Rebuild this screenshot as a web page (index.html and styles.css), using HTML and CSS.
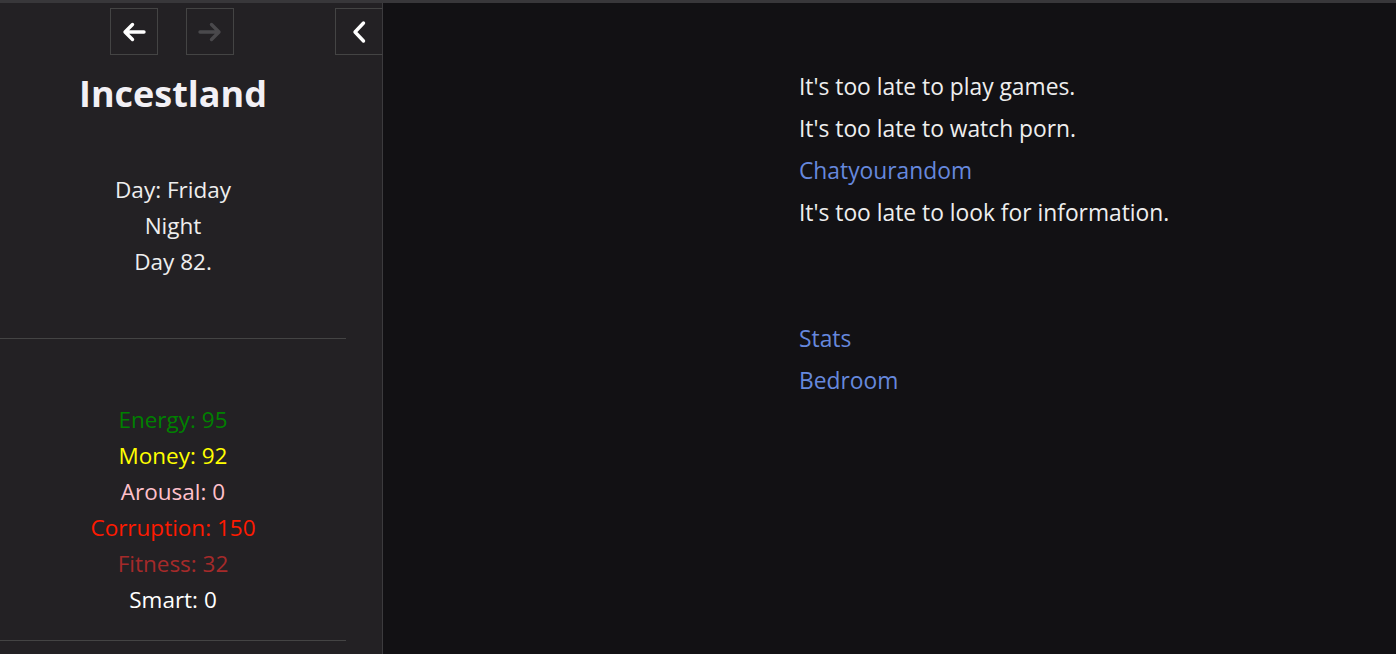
FILE: index.html
```html
<!DOCTYPE html>
<html lang="en">
<head>
  <meta charset="UTF-8">
  <title>Incestland</title>
  <link rel="stylesheet" href="styles.css">
</head>
<body>
  <aside class="sidebar">
    <div class="history">
      <button class="hbtn" title="Backward">
        <svg width="26" height="22" viewBox="0 0 26 22"><path d="M23 11H4.5M11.5 3.5L4 11l7.5 7.5" fill="none" stroke="#fff" stroke-width="3.4" stroke-linecap="round" stroke-linejoin="round"/></svg>
      </button>
      <button class="hbtn off" title="Forward">
        <svg width="26" height="22" viewBox="0 0 26 22"><path d="M3 11h18.5M14.5 3.5L22 11l-7.5 7.5" fill="none" stroke="#4a494c" stroke-width="3.4" stroke-linecap="round" stroke-linejoin="round"/></svg>
      </button>
    </div>
    <button class="stow" title="Toggle the UI bar">
      <svg width="18" height="24" viewBox="0 0 18 24"><path d="M13.5 3L5 12l8.5 9" fill="none" stroke="#fff" stroke-width="3.4" stroke-linecap="round" stroke-linejoin="round"/></svg>
    </button>

    <h1 class="title">Incestland</h1>

    <div class="caption">
      <div>Day: Friday</div>
      <div>Night</div>
      <div>Day 82.</div>
    </div>

    <hr class="rule">

    <div class="stats">
      <div class="energy">Energy: 95</div>
      <div class="money">Money: 92</div>
      <div class="arousal">Arousal: 0</div>
      <div class="corruption">Corruption: 150</div>
      <div class="fitness">Fitness: 32</div>
      <div class="smart">Smart: 0</div>
    </div>

    <hr class="rule">
  </aside>

  <main class="story">
    <div class="passage">
      <p>It's too late to play games.</p>
      <p>It's too late to watch porn.</p>
      <p><a href="#">Chatyourandom</a></p>
      <p>It's too late to look for information.</p>
      <p class="blank"></p>
      <p class="blank"></p>
      <p><a href="#">Stats</a></p>
      <p><a href="#">Bedroom</a></p>
    </div>
  </main>
</body>
</html>
```

FILE: styles.css
```css
html, body {
  height: 100%;
}
body {
  margin: 0;
  display: flex;
  border-top: 3px solid #38373a;
  box-sizing: border-box;
  background: #121114;
  color: #eee;
  font-family: "Open Sans", "Noto Sans", sans-serif;
  overflow: hidden;
}
.sidebar {
  position: relative;
  width: 382px;
  flex: none;
  background: #232124;
  border-right: 1px solid #3c3b3e;
}
.history {
  width: 344px;
  display: flex;
  justify-content: center;
  gap: 28px;
  margin-top: 5px;
}
.hbtn, .stow {
  width: 48px;
  height: 47px;
  padding: 0;
  display: flex;
  align-items: center;
  justify-content: center;
  background: transparent;
  border: 1px solid #444;
  cursor: pointer;
}
.hbtn.off {
  cursor: not-allowed;
}
.stow {
  position: absolute;
  top: 5px;
  right: -1px;
  border-right-color: #3c3b3e;
}
.title {
  width: 346px;
  margin: 14px 0 0;
  font-size: 36px;
  line-height: 50px;
  font-weight: 700;
  text-align: center;
  color: #f2f0f5;
}
.caption, .stats {
  width: 346px;
  text-align: center;
  font-size: 22.5px;
  line-height: 36px;
}
.caption {
  margin-top: 53px;
}
.rule {
  width: 346px;
  margin: 58px 0 0;
  border: none;
  border-top: 1px solid #444;
}
.stats {
  margin: 63px 0 22px;
}
.stats + .rule {
  margin-top: 0;
}
.energy { color: #008000; }
.money { color: #ffff00; }
.arousal { color: #ffc0cb; }
.corruption { color: #ff1a00; }
.fitness { color: #a52a2a; }
.smart { color: #fff; }
.story {
  flex: 1;
  padding-top: 63px;
}
.passage {
  margin-left: 416px;
  font-size: 22.8px;
  line-height: 42px;
}
.passage p {
  margin: 0;
}
.passage .blank {
  height: 42px;
}
.passage a {
  color: #68d;
  text-decoration: none;
}
```
